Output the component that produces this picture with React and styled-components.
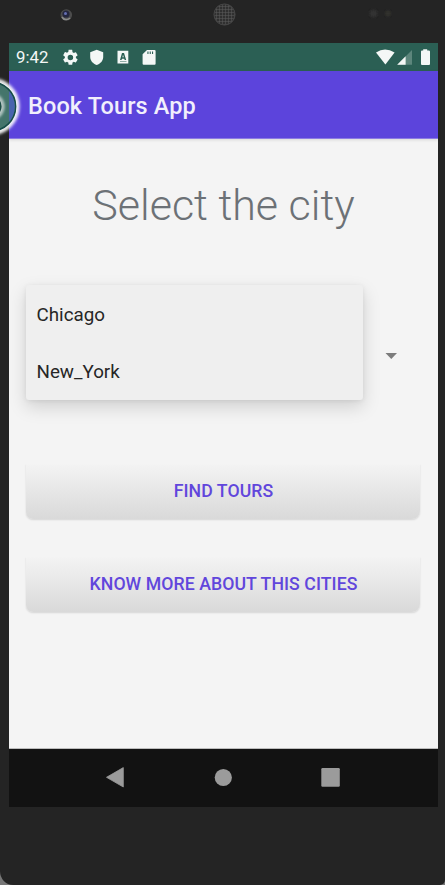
import React from "react";
import styled, { createGlobalStyle } from "styled-components";

const Global = createGlobalStyle`
  * { box-sizing: border-box; }
  body { margin: 0; background: #242424; overflow: hidden; }
`;

const Device = styled.div`
  position: relative;
  width: 445px;
  height: 885px;
  overflow: hidden;
  display: flex;
  flex-direction: column;
  padding: 0 7px 0 9px;
  background: #242424;
  border-radius: 0 0 5px 13px / 0 0 5px 14px;
  font-family: Roboto, sans-serif;
`;

const Backdrop = styled.div`
  width: 445px;
  height: 885px;
  background: #777;
`;

const Bezel = styled.div`
  height: 43px;
  flex: none;
  margin: 0 -7px 0 -9px;
`;

const StatusBar = styled.header`
  height: 28px;
  flex: none;
  background: #2b5f54;
`;

const StatusRow = styled.div`
  display: flex;
  align-items: center;
  height: 28px;
  padding-left: 7px;
`;

const Clock = styled.span`
  width: 45px;
  font-size: 16.8px;
  line-height: 30px;
  color: #f4f7f6;
  white-space: nowrap;
`;

const StatusIcons = styled.svg`
  display: block;
  flex: none;
`;

const Spacer = styled.div`
  flex: 1;
`;

const AppBar = styled.div`
  height: 67.5px;
  flex: none;
  padding-left: 19px;
  background: #5c44dc;
  border-bottom: 1px solid #8c7be2;
  box-shadow: 0 1px 3px rgba(0, 0, 0, 0.12);
  z-index: 1;
`;

const AppTitle = styled.h1`
  margin: 0;
  font-size: 23.5px;
  font-weight: 500;
  line-height: 71px;
  letter-spacing: 0.12px;
  color: #f1effc;
  white-space: nowrap;
`;

const Content = styled.main`
  height: 610.5px;
  flex: none;
  display: flex;
  flex-direction: column;
  padding: 0 18.5px 0 16.5px;
  background: #f4f4f4;
  border-bottom: 1px solid #bcbcbc;
`;

const Heading = styled.h2`
  margin: 36.5px 0 0;
  padding-left: 2px;
  height: 60px;
  font-size: 43px;
  font-weight: 300;
  line-height: 60px;
  text-align: center;
  color: #6c7176;
  white-space: nowrap;
`;

const Spinner = styled.div`
  display: flex;
  align-items: center;
  margin-top: 50px;
  height: 115px;
`;

const Menu = styled.ul`
  width: 337px;
  height: 115px;
  margin: 0;
  padding: 0;
  list-style: none;
  border-radius: 3px;
  background: #efefef;
  box-shadow: 0 7px 18px rgba(0, 0, 0, 0.15), 0 1px 5px rgba(0, 0, 0, 0.07);
`;

const MenuItem = styled.li`
  height: 57.4px;
  padding-left: 11px;
  font-size: 18.8px;
  line-height: 61px;
  color: #262626;
`;

const Caret = styled.svg`
  display: block;
  margin: 26px 0 0 22px;
`;

const Button = styled.button`
  display: flex;
  justify-content: center;
  align-items: flex-start;
  height: 57px;
  flex: none;
  margin: ${(p) => p.$gap}px 0 0;
  padding: 0 0 0 2px;
  border: 0;
  border-radius: 3px 3px 8px 7px;
  background: linear-gradient(#f4f4f4, #ebebeb 35%, #d9d9d9);
  box-shadow: 0 1px 2px rgba(0, 0, 0, 0.13);
  clip-path: inset(3px -3px -4px -3px);
  font-family: inherit;
  font-size: 17.7px;
  font-weight: 500;
  line-height: 59px;
  letter-spacing: 0.06px;
  color: #6146dc;
`;

const NavBar = styled.nav`
  height: 58px;
  flex: none;
  background: #121212;
`;

const Ring = styled.svg`
  position: absolute;
  left: 0;
  top: 70px;
  z-index: 2;
`;

export default function App() {
  return (
    <Backdrop>
      <Global />
      <Device>
        <Bezel>
          <svg width="445" height="43">
            <defs>
              <pattern id="mesh" width="3" height="3" patternUnits="userSpaceOnUse">
                <path d="M0 0H3M0 0V3" stroke="#5c5c5c" strokeWidth="1" />
              </pattern>
              <filter id="soft">
                <feGaussianBlur stdDeviation="0.8" />
              </filter>
            </defs>
            <circle cx="66.3" cy="15" r="5.8" fill="#4c4c4c" />
            <path d="M62 17A5 5 0 0 0 70 18" fill="none" stroke="#8b8b8b" strokeWidth="1.6" />
            <circle cx="66" cy="14" r="3.6" fill="#24263f" />
            <circle cx="65.5" cy="13.6" r="1.5" fill="#6670b4" />
            <circle cx="224.5" cy="14.5" r="11" fill="#303030" />
            <circle cx="224.5" cy="14.5" r="10.5" fill="url(#mesh)" stroke="#454545" />
            <circle cx="373.5" cy="13.5" r="4" fill="#303030" filter="url(#soft)" />
            <circle cx="388" cy="13.5" r="3" fill="#32312d" filter="url(#soft)" />
          </svg>
        </Bezel>
        <StatusBar>
          <StatusRow>
            <Clock>9:42</Clock>
            <StatusIcons width="100" height="28" fill="#f4f7f6">
              <svg x="0.2" y="5.2" width="18.4" height="18.4" viewBox="0 0 24 24">
                <path d="M19.14 12.94c.04-.3.06-.61.06-.94s-.02-.64-.07-.94l2.03-1.58a.49.49 0 0 0 .12-.61l-1.92-3.32a.488.488 0 0 0-.59-.22l-2.39.96c-.5-.38-1.03-.7-1.62-.94l-.36-2.54A.484.484 0 0 0 13.92 2h-3.84c-.24 0-.43.17-.47.41l-.36 2.54c-.59.24-1.13.57-1.62.94l-2.39-.96a.48.48 0 0 0-.59.22L2.74 8.87c-.12.21-.08.47.12.61l2.03 1.58c-.05.3-.09.63-.09.94s.02.64.07.94l-2.03 1.58a.49.49 0 0 0-.12.61l1.92 3.32c.12.22.37.29.59.22l2.39-.96c.5.38 1.03.7 1.62.94l.36 2.54c.05.24.24.41.48.41h3.84c.24 0 .44-.17.47-.41l.36-2.54c.59-.24 1.13-.56 1.62-.94l2.39.96c.22.08.47 0 .59-.22l1.92-3.32a.48.48 0 0 0-.12-.61zM12 15.6A3.6 3.6 0 1 1 12 8.4a3.6 3.6 0 0 1 0 7.2z" />
              </svg>
              <path d="M35.7 6.7L42.2 9.2V14C42.2 17.6 39.5 20.8 35.7 21.9C31.9 20.8 29.2 17.6 29.2 14V9.2Z" />
              <path fillRule="evenodd" d="M56.5 7.7H67.3V20.5H56.5ZM61 10L59 17H60.5L61 15.7H63.2L63.7 17H65.2L63 10ZM62 11.8L62.8 14.3H61.4Z" />
              <path d="M59 18H65.5V19H59Z" fill="#8fada6" />
              <path fillRule="evenodd" d="M86 7H93.5Q94.6 7 94.6 8V20.7Q94.6 21.7 93.6 21.7H82.6Q81.6 21.7 81.6 20.7V11.2ZM86.4 8.6V11H87.5V8.6ZM88.7 8.6V11H89.8V8.6ZM91 8.6V11H92.1V8.6Z" />
            </StatusIcons>
            <Spacer />
            <StatusIcons width="63" height="28" fill="#f4f7f6">
              <path d="M1 9.6Q10 3.4 19.6 9.6L10.4 21.4Z" />
              <path d="M37 7V21.7H22.2Z" fill="#5d867c" />
              <path d="M30.6 13.3V21.7H22.2Z" />
              <path d="M48.2 6.2H52.2V7.6H53.8Q55 7.6 55 8.6V20.9Q55 21.9 54 21.9H47Q46 21.9 46 20.9V8.6Q46 7.6 47 7.6H48.2Z" />
            </StatusIcons>
          </StatusRow>
        </StatusBar>
        <AppBar>
          <AppTitle>Book Tours App</AppTitle>
        </AppBar>
        <Content>
          <Heading>Select the city</Heading>
          <Spinner>
            <Menu>
              <MenuItem>Chicago</MenuItem>
              <MenuItem>New_York</MenuItem>
            </Menu>
            <Caret width="13" height="8">
              <path d="M0.5 1H12L6.3 7Z" fill="#7c7c7c" />
            </Caret>
          </Spinner>
          <Button $gap={61.5}>FIND TOURS</Button>
          <Button $gap={36}>KNOW MORE ABOUT THIS CITIES</Button>
        </Content>
        <NavBar>
          <svg width="429" height="58" fill="#9b9b9b">
            <path d="M97.5 28.3L114.3 18.6V38Z" stroke="#9b9b9b" strokeWidth="0.8" strokeLinejoin="round" />
            <circle cx="214.3" cy="28.5" r="8.6" />
            <rect x="312.3" y="19" width="18.5" height="18.8" rx="1.2" />
          </svg>
        </NavBar>
        <Ring width="30" height="74">
          <defs>
            <filter id="glow" x="-50%" y="-50%" width="200%" height="200%">
              <feGaussianBlur stdDeviation="1.5" />
            </filter>
            <clipPath id="overBar">
              <rect x="9" y="0" width="20" height="74" />
            </clipPath>
          </defs>
          <circle cx="-9" cy="36.5" r="26.5" fill="none" stroke="#fff" strokeWidth="4" filter="url(#glow)" />
          <circle cx="-9" cy="36.5" r="26.2" fill="#f3f6f6" />
          <circle cx="-9" cy="36.5" r="24.6" fill="#44756b" stroke="#164c48" strokeWidth="1.6" />
          <circle cx="-9" cy="36.5" r="23.8" fill="#4864ae" clipPath="url(#overBar)" />
          <circle cx="-9" cy="36.5" r="12" fill="none" stroke="#fff" strokeWidth="2" filter="url(#glow)" />
          <circle cx="-9" cy="36.5" r="11.2" fill="#1b4d46" stroke="#b6c6c3" strokeWidth="1.2" />
        </Ring>
      </Device>
    </Backdrop>
  );
}
